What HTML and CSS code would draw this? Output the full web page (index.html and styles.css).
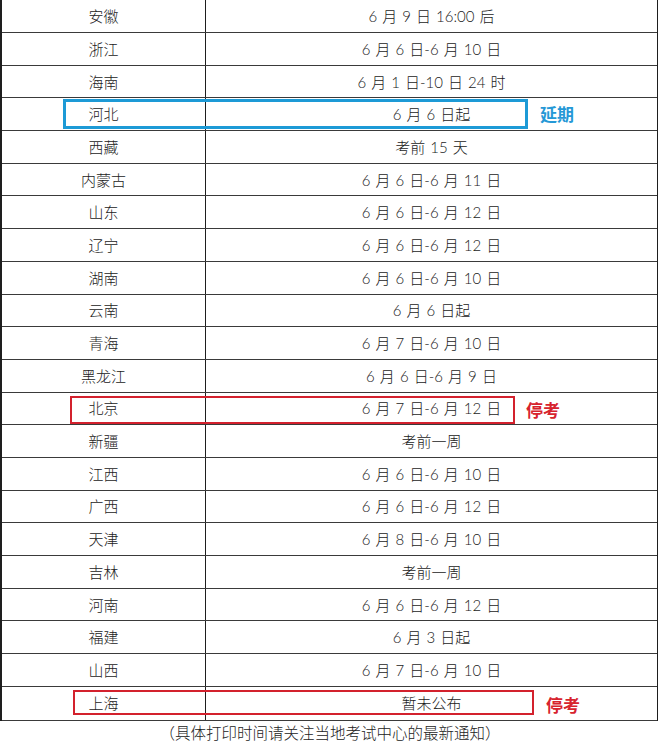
FILE: index.html
```html
<!DOCTYPE html>
<html lang="zh-CN">
<head>
<meta charset="utf-8">
<link rel="stylesheet" href="styles.css">
</head>
<body>
<div class="page">
  <div class="table">
    <div class="row"><div class="c1">安徽</div><div class="c2">6 月 9 日 16:00 后</div></div>
    <div class="row"><div class="c1">浙江</div><div class="c2">6 月 6 日-6 月 10 日</div></div>
    <div class="row"><div class="c1">海南</div><div class="c2">6 月 1 日-10 日 24 时</div></div>
    <div class="row"><div class="c1">河北</div><div class="c2">6 月 6 日起</div></div>
    <div class="row"><div class="c1">西藏</div><div class="c2">考前 15 天</div></div>
    <div class="row"><div class="c1">内蒙古</div><div class="c2">6 月 6 日-6 月 11 日</div></div>
    <div class="row"><div class="c1">山东</div><div class="c2">6 月 6 日-6 月 12 日</div></div>
    <div class="row"><div class="c1">辽宁</div><div class="c2">6 月 6 日-6 月 12 日</div></div>
    <div class="row"><div class="c1">湖南</div><div class="c2">6 月 6 日-6 月 10 日</div></div>
    <div class="row"><div class="c1">云南</div><div class="c2">6 月 6 日起</div></div>
    <div class="row"><div class="c1">青海</div><div class="c2">6 月 7 日-6 月 10 日</div></div>
    <div class="row"><div class="c1">黑龙江</div><div class="c2">6 月 6 日-6 月 9 日</div></div>
    <div class="row"><div class="c1">北京</div><div class="c2">6 月 7 日-6 月 12 日</div></div>
    <div class="row"><div class="c1">新疆</div><div class="c2">考前一周</div></div>
    <div class="row"><div class="c1">江西</div><div class="c2">6 月 6 日-6 月 10 日</div></div>
    <div class="row"><div class="c1">广西</div><div class="c2">6 月 6 日-6 月 12 日</div></div>
    <div class="row"><div class="c1">天津</div><div class="c2">6 月 8 日-6 月 10 日</div></div>
    <div class="row"><div class="c1">吉林</div><div class="c2">考前一周</div></div>
    <div class="row"><div class="c1">河南</div><div class="c2">6 月 6 日-6 月 12 日</div></div>
    <div class="row"><div class="c1">福建</div><div class="c2">6 月 3 日起</div></div>
    <div class="row"><div class="c1">山西</div><div class="c2">6 月 7 日-6 月 10 日</div></div>
    <div class="row last"><div class="c1">上海</div><div class="c2">暂未公布</div></div>
  </div>
  <div class="note">（具体打印时间请关注当地考试中心的最新通知）</div>

  <div class="mark blue box-hebei"></div>
  <div class="tag blue tag-hebei">延期</div>
  <div class="mark red box-beijing"></div>
  <div class="tag red tag-beijing">停考</div>
  <div class="mark red box-shanghai"></div>
  <div class="tag red tag-shanghai">停考</div>
</div>
</body>
</html>
```
FILE: styles.css
```css
html, body {
  margin: 0;
  padding: 0;
  background: #ffffff;
}
.page {
  position: relative;
  width: 660px;
  height: 744px;
  overflow: hidden;
}
.table {
  box-sizing: border-box;
  width: 658px;
  margin-top: -0.7px;
  border-left: 2px solid #1e1e1e;
  border-right: 1.5px solid #1e1e1e;
  border-top: 1px solid #1e1e1e;
}
.row {
  box-sizing: border-box;
  display: grid;
  grid-template-columns: 204px 1fr;
  height: 32.7px;
  border-bottom: 1.5px solid #3a3a3a;
  color: #222222;
}
.row.last {
  height: 34px;
}
.c1, .c2 {
  display: flex;
  align-items: center;
  justify-content: center;
  box-sizing: border-box;
}
.c1 {
  border-right: 1px solid #1e1e1e;
  font-family: "Noto Sans CJK SC", sans-serif;
  font-size: 15px;
  font-weight: 300;
  padding-bottom: 1px;
}
.c2 {
  font-family: Lato, "Noto Sans CJK SC", sans-serif;
  font-size: 15px;
  font-weight: 300;
  white-space: pre;
  word-spacing: 1px;
  padding-bottom: 1px;
  color: #1a1a1a;
}
.note {
  text-align: center;
  font-family: "Noto Sans CJK SC", sans-serif;
  font-size: 15.5px;
  font-weight: 300;
  color: #222222;
  line-height: 22px;
  margin-top: 0;
}
.mark {
  position: absolute;
  box-sizing: border-box;
}
.mark.blue {
  border: 3px solid #1d9ad6;
}
.mark.red {
  border: 2.5px solid #d3212d;
}
.box-hebei {
  left: 63px;
  top: 99px;
  width: 465px;
  height: 30px;
}
.box-beijing {
  left: 70px;
  top: 396px;
  width: 445px;
  height: 28px;
}
.box-shanghai {
  left: 73px;
  top: 690px;
  width: 461px;
  height: 25px;
}
.tag {
  position: absolute;
  font-family: "Noto Sans CJK SC", sans-serif;
  font-weight: 700;
  font-size: 17px;
  line-height: 20px;
}
.tag.blue { color: #2598d6; }
.tag.red { color: #d7232e; }
.tag-hebei { left: 540px; top: 104px; }
.tag-beijing { left: 526px; top: 400px; }
.tag-shanghai { left: 546px; top: 695px; }
```
